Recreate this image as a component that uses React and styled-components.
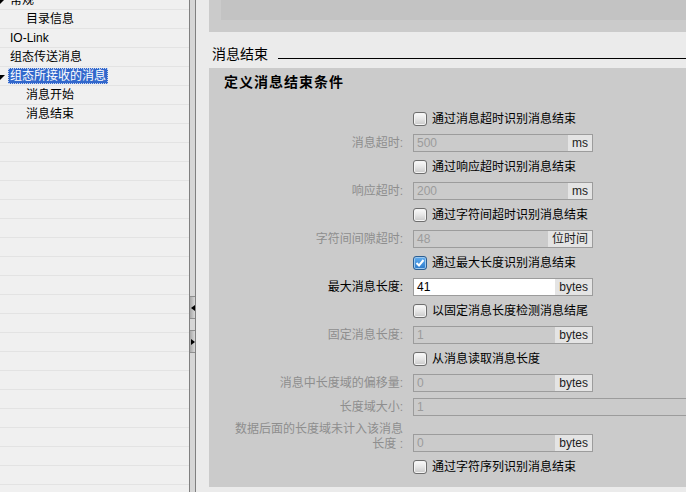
import React from 'react';
import styled, { createGlobalStyle } from 'styled-components';

const GlobalStyle = createGlobalStyle`
  html, body { margin: 0; padding: 0; }
  body {
    width: 686px; height: 492px; overflow: hidden; background: #ebebeb;
    font-family: "Liberation Sans", "Noto Sans CJK SC", sans-serif;
    font-size: 12px; color: #000;
  }
`;

const Window = styled.div`
  display: flex; width: 686px; height: 492px; overflow: hidden;
`;

const TreePanel = styled.div`
  width: 189px; flex: none; background: #f0f0f0; overflow: hidden;
`;
const TreeList = styled.ul`
  list-style: none; margin: -9px 0 0; padding: 0;
`;
const TreeRow = styled.li`
  display: flex; align-items: center; height: 19px; box-sizing: border-box;
  border-bottom: 1px solid #e3e3e3; white-space: nowrap;
  padding-left: ${(p) => (p.$level === 2 ? 16 : 0)}px;
`;
const Expander = styled.span`
  width: 8px; height: 18px; flex: none; display: flex; align-items: center;
`;
const TreeLabel = styled.span`
  line-height: 14px; padding: 0 1px;
  border: 1px dotted ${(p) => (p.$selected ? '#c9d6f2' : 'transparent')};
  background: ${(p) => (p.$selected ? '#3268cc' : 'transparent')};
  color: ${(p) => (p.$selected ? '#fff' : '#000')};
`;

const Splitter = styled.div`
  width: 5px; flex: none; background: #d6d6d6;
  border-left: 1px solid #808080; border-right: 1px solid #808080;
  display: flex; flex-direction: column; gap: 11px; padding-top: 296px;
`;
const SplitButton = styled.div`
  height: 23px; box-sizing: border-box;
  border-top: 1px solid #8e8e8e; border-bottom: 1px solid #8e8e8e;
  background: linear-gradient(to right, #a8a8a8, #d8d8d8);
  display: flex; align-items: center; justify-content: center;
`;

const Content = styled.div`
  flex: 1; min-width: 0; display: flex; flex-direction: column;
  padding-left: 13px; background: #ebebeb; overflow: hidden;
`;
const TopBlock = styled.div`
  height: 32px; flex: none; background: #cbcbcb; padding-left: 12px;
`;
const TopInner = styled.div`
  height: 20px; background: #c3c3c3;
`;
const SectionHeader = styled.div`
  height: 36px; flex: none; box-sizing: border-box;
  display: flex; align-items: flex-start; padding: 13px 0 0 3px;
`;
const SectionTitle = styled.span`
  font-family: "Noto Sans CJK SC", sans-serif; font-size: 14px; line-height: 16px;
`;
const SectionRule = styled.div`
  flex: 1; height: 1px; background: #000; margin: 13px 0 0 10px;
`;

const Panel = styled.div`
  flex: 1; min-height: 0; margin-bottom: 5px; background: #cbcbcb;
  padding: 4px 0 0 15px; overflow: hidden;
`;
const PanelTitle = styled.div`
  font-family: "Noto Sans CJK SC", sans-serif; font-weight: 700;
  font-size: 14px; line-height: 18px; letter-spacing: 1px;
`;
const Form = styled.div`
  margin: 17px 0 0 9px; display: flex; flex-direction: column;
`;
const FormRow = styled.div`
  display: grid; grid-template-columns: 170px 1fr; column-gap: 10px;
  box-sizing: border-box;
  height: ${(p) => (p.$tall ? 36 : 24)}px;
  align-items: ${(p) => (p.$tall ? 'end' : 'center')};
  padding-bottom: ${(p) => (p.$tall ? 3 : 0)}px;
`;
const FieldLabel = styled.div`
  text-align: right; line-height: 15px; white-space: nowrap;
  color: ${(p) => (p.$enabled ? '#000' : '#8e8e8e')};
`;
const Field = styled.div`
  display: flex; box-sizing: border-box; height: 18px;
  width: ${(p) => (p.$wide ? '420px' : '180px')};
  border: 1px solid #9c9c9c;
  background: ${(p) => (p.$enabled ? '#fff' : '#cbcbcb')};
`;
const FieldValue = styled.span`
  flex: 1; padding-left: 3px; line-height: 16px;
  color: ${(p) => (p.$enabled ? '#000' : '#9b9b9b')};
`;
const FieldUnit = styled.span`
  padding: 0 4px; line-height: 16px; background: #e4e4e4; color: #1c1c1c;
`;
const CheckLine = styled.div`
  grid-column: 2; display: flex; align-items: center; gap: 5px;
  line-height: 16px; white-space: nowrap;
`;
const Box = styled.span`
  width: 14px; height: 14px; box-sizing: border-box; flex: none;
  border: 1px solid ${(p) => (p.$checked ? '#2d5f93' : '#6e6e6e')};
  border-radius: 3px;
  background: ${(p) =>
    p.$checked
      ? 'linear-gradient(#63aef0, #2b79c9)'
      : 'linear-gradient(#fbfbfb, #e6e6e6 50%, #c9c9c9)'};
  box-shadow: inset 0 0 0 1px ${(p) => (p.$checked ? '#9cc8ee' : '#f4f4f4')};
  display: flex; align-items: center; justify-content: center;
`;

const tree = [
  { text: '常规', level: 1, expander: true },
  { text: '目录信息', level: 2 },
  { text: 'IO-Link', level: 1 },
  { text: '组态传送消息', level: 1 },
  { text: '组态所接收的消息', level: 1, expander: true, selected: true },
  { text: '消息开始', level: 2 },
  { text: '消息结束', level: 2 },
];
const treeRows = [...tree, ...Array.from({ length: 20 }, () => null)];

const form = [
  { type: 'check', text: '通过消息超时识别消息结束' },
  { type: 'field', label: '消息超时:', value: '500', unit: 'ms' },
  { type: 'check', text: '通过响应超时识别消息结束' },
  { type: 'field', label: '响应超时:', value: '200', unit: 'ms' },
  { type: 'check', text: '通过字符间超时识别消息结束' },
  { type: 'field', label: '字符间间隙超时:', value: '48', unit: '位时间' },
  { type: 'check', text: '通过最大长度识别消息结束', checked: true },
  { type: 'field', label: '最大消息长度:', value: '41', unit: 'bytes', enabled: true },
  { type: 'check', text: '以固定消息长度检测消息结尾' },
  { type: 'field', label: '固定消息长度:', value: '1', unit: 'bytes' },
  { type: 'check', text: '从消息读取消息长度' },
  { type: 'field', label: '消息中长度域的偏移量:', value: '0', unit: 'bytes' },
  { type: 'field', label: '长度域大小:', value: '1', wide: true },
  { type: 'field', label: ['数据后面的长度域未计入该消息', '长度 :'], value: '0', unit: 'bytes', tall: true },
  { type: 'check', text: '通过字符序列识别消息结束' },
];

const Triangle = () => (
  <svg width="8" height="18" viewBox="0 0 8 18">
    <polygon points="0,8 5,8 0,13" fill="#000" />
  </svg>
);

const Check = () => (
  <svg width="10" height="10" viewBox="0 0 10 10">
    <path d="M1.5 5 L4 7.5 L8.5 2" stroke="#fff" strokeWidth="2" fill="none" />
  </svg>
);

export default function App() {
  return (
    <>
      <GlobalStyle />
      <Window>
        <TreePanel>
          <TreeList>
            {treeRows.map((r, i) => (
              <TreeRow key={i} $level={r ? r.level : 1}>
                {r && (
                  <>
                    <Expander>{r.expander && <Triangle />}</Expander>
                    <TreeLabel $selected={r.selected}>{r.text}</TreeLabel>
                  </>
                )}
              </TreeRow>
            ))}
          </TreeList>
        </TreePanel>
        <Splitter>
          <SplitButton>
            <svg width="4" height="6" viewBox="0 0 4 6">
              <polygon points="4,0 4,6 0,3" fill="#000" />
            </svg>
          </SplitButton>
          <SplitButton>
            <svg width="4" height="6" viewBox="0 0 4 6">
              <polygon points="0,0 0,6 4,3" fill="#000" />
            </svg>
          </SplitButton>
        </Splitter>
        <Content>
          <TopBlock>
            <TopInner />
          </TopBlock>
          <SectionHeader>
            <SectionTitle>消息结束</SectionTitle>
            <SectionRule />
          </SectionHeader>
          <Panel>
            <PanelTitle>定义消息结束条件</PanelTitle>
            <Form>
              {form.map((f, i) =>
                f.type === 'check' ? (
                  <FormRow key={i}>
                    <CheckLine>
                      <Box $checked={f.checked}>{f.checked && <Check />}</Box>
                      {f.text}
                    </CheckLine>
                  </FormRow>
                ) : (
                  <FormRow key={i} $tall={f.tall}>
                    <FieldLabel $enabled={f.enabled}>
                      {Array.isArray(f.label)
                        ? f.label.map((l, j) => <div key={j}>{l}</div>)
                        : f.label}
                    </FieldLabel>
                    <Field $enabled={f.enabled} $wide={f.wide}>
                      <FieldValue $enabled={f.enabled}>{f.value}</FieldValue>
                      {f.unit && <FieldUnit>{f.unit}</FieldUnit>}
                    </Field>
                  </FormRow>
                )
              )}
            </Form>
          </Panel>
        </Content>
      </Window>
    </>
  );
}
